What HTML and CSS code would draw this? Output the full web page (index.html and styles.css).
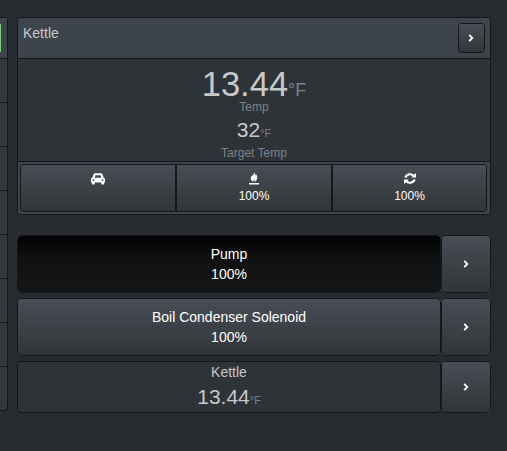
FILE: index.html
```
<!DOCTYPE html>
<html lang="en">
<head>
    <meta charset="UTF-8">
    <meta name="viewport" content="width=device-width, initial-scale=1.0">
    <title>Kettle</title>
    <link rel="stylesheet" href="styles.css">
</head>
<body>
    <svg width="0" height="0" class="defs">
        <symbol id="chevron" viewBox="0 0 6 8">
            <path d="M1.2 0.9 L4.3 4 L1.2 7.1" fill="none" stroke="#fff" stroke-width="1.8"/>
        </symbol>
    </svg>
    <div class="page">
        <div class="side">
            <div class="side-head"><span class="side-btn"></span></div>
            <div class="side-item"></div>
            <div class="side-item"></div>
            <div class="side-item"></div>
            <div class="side-item"></div>
            <div class="side-item"></div>
            <div class="side-item"></div>
            <div class="side-item"></div>
            <div class="side-item"></div>
        </div>
        <div class="main">
            <div class="panel">
                <div class="panel-heading">
                    <span>Kettle</span>
                    <button class="btn btn-small"><svg class="chevron"><use href="#chevron"/></svg></button>
                </div>
                <div class="panel-body">
                    <div class="temp">13.44<small>°F</small></div>
                    <div class="label">Temp</div>
                    <div class="target">32<small>°F</small></div>
                    <div class="label label-target">Target Temp</div>
                </div>
                <div class="panel-footer">
                    <button class="btn">
                        <svg class="icon icon-car" width="14" height="12" viewBox="0 0 14 12">
                            <path fill="#fff" fill-rule="evenodd" d="M0 6.6 Q0 5 1.4 4.8 L2.2 1.9 Q2.6 .3 4.2 .3 H9.8 Q11.4 .3 11.8 1.9 L12.6 4.8 Q14 5 14 6.6 V9.5 H13.2 V10.3 Q13.2 11.7 11.7 11.7 Q10.2 11.7 10.2 10.3 V9.5 H3.8 V10.3 Q3.8 11.7 2.3 11.7 Q.8 11.7 .8 10.3 V9.5 H0 Z M3.8 4.8 H10.2 L9.6 2.3 H4.4 Z M2.4 6.2 A.9 .9 0 1 0 2.4 8 A.9 .9 0 1 0 2.4 6.2 Z M11.6 6.2 A.9 .9 0 1 0 11.6 8 A.9 .9 0 1 0 11.6 6.2 Z"/>
                        </svg>
                    </button>
                    <button class="btn">
                        <svg class="icon" width="10" height="13" viewBox="0 0 10 13">
                            <path fill="#fff" d="M5.4 0 C6.1 1.6 6 2.4 6.4 3.2 L7.1 2.2 C9 4.8 8.8 8 5.6 9.9 C6 8.8 5.7 8.4 5.2 7.6 C4.6 8.3 4.2 9 4.6 9.9 C1.9 9.2 1.1 6.8 2.2 4.8 C3.2 3.2 5.5 2.6 5.4 0 Z M0 11 H10 V12.4 H0 Z"/>
                        </svg>
                        100%
                    </button>
                    <button class="btn">
                        <svg class="icon" width="12" height="13" viewBox="0 0 12 13">
                            <path fill="none" stroke="#fff" stroke-width="2.1" d="M1.3 5.6 A4.8 4.5 0 0 1 9.4 3.6 M10.7 7.4 A4.8 4.5 0 0 1 2.6 9.4"/>
                            <path fill="#fff" d="M12 1 V5.6 H7.2 Z M0 12 V7.4 H4.8 Z"/>
                        </svg>
                        100%
                    </button>
                </div>
            </div>
            <div class="row">
                <button class="btn btn-wide active">Pump<br>100%</button>
                <button class="btn btn-more"><svg class="chevron"><use href="#chevron"/></svg></button>
            </div>
            <div class="row">
                <button class="btn btn-wide">Boil Condenser Solenoid<br>100%</button>
                <button class="btn btn-more"><svg class="chevron"><use href="#chevron"/></svg></button>
            </div>
            <div class="row row-sensor">
                <div class="sensor">
                    <div>Kettle</div>
                    <div class="sensor-value">13.44<small>°F</small></div>
                </div>
                <button class="btn btn-more"><svg class="chevron"><use href="#chevron"/></svg></button>
            </div>
        </div>
    </div>
</body>
</html>
```
FILE: styles.css
```
* {
    box-sizing: border-box;
}
body {
    margin: 0;
    background-color: #272b30;
    color: #c8c8c8;
    font-family: "Liberation Sans", Arial, sans-serif;
    font-size: 14px;
    line-height: 20px;
}
.defs {
    display: block;
}
.page {
    display: flex;
    align-items: flex-start;
    gap: 9px;
    padding-top: 17px;
    height: 451px;
    overflow: hidden;
}
.side {
    width: 8px;
    border: 1px solid #15171a;
    border-left: none;
    border-radius: 0 4px 4px 0;
    background-color: #32383e;
}
.side-head {
    height: 40px;
    padding-top: 6px;
    background-color: #3e444c;
}
.side-btn {
    display: block;
    width: 1px;
    height: 28px;
    background-color: #7bcf7b;
}
.side-item {
    height: 44px;
    border-top: 1px solid #15171a;
}
.main {
    width: 474px;
}
.panel {
    height: 198px;
    margin-bottom: 20px;
    border: 1px solid #15171a;
    border-radius: 4px;
    background-color: #2e3338;
    overflow: hidden;
}
.panel-heading {
    display: flex;
    justify-content: space-between;
    height: 41px;
    padding: 5px;
    border-bottom: 1px solid #15171a;
    background-color: #3e444c;
}
.panel-body {
    height: 102px;
    text-align: center;
}
.temp {
    padding-top: 7px;
    font-size: 34.5px;
    line-height: 36px;
}
small {
    color: #7a8288;
    font-size: 52%;
    line-height: 1;
}
.label {
    margin-top: -1px;
    color: #7a8288;
    font-size: 12px;
    line-height: 12px;
}
.target {
    margin-top: 4px;
    font-size: 21px;
    line-height: 26px;
}
.label-target {
    margin-top: 4px;
}
.panel-footer {
    display: flex;
    height: 53px;
    padding: 2px 3px 2px 2px;
    border-top: 1px solid #15171a;
    background-color: #3e444c;
}
.btn {
    border: 1px solid #15171a;
    border-radius: 4px;
    padding: 0;
    background-image: linear-gradient(#484e55, #3a3f44 60%, #313539);
    color: #fff;
    font-family: inherit;
    font-size: 14px;
    line-height: 20px;
    cursor: pointer;
}
.btn-small {
    width: 27px;
    height: 30px;
    padding: 0 1px 2px 0;
    border-radius: 3px;
}
.panel-footer .btn {
    width: 156px;
    display: flex;
    flex-direction: column;
    align-items: center;
    flex-shrink: 0;
    height: 48px;
    padding-top: 7px;
    border-radius: 0;
    font-size: 12px;
    line-height: 18px;
}
.panel-footer .btn:first-child {
    border-radius: 3px 0 0 3px;
}
.panel-footer .btn:last-child {
    width: 155px;
    border-radius: 0 3px 3px 0;
}
.icon {
    display: block;
    margin-bottom: 2px;
    flex-shrink: 0;
}
.icon-car {
    margin-top: 1px;
}
.chevron {
    width: 6px;
    height: 8px;
}
.row {
    display: flex;
    height: 58px;
    margin-bottom: 5px;
}
.btn-wide,
.sensor {
    width: 424px;
}
.btn-more {
    width: 50px;
    padding: 0 1px 2px 0;
}
.btn.active {
    background-image: linear-gradient(#020202, #101112 40%, #141618);
}
.row-sensor {
    height: 52px;
}
.sensor {
    border: 1px solid #15171a;
    border-radius: 4px;
    background-color: #2e3338;
    text-align: center;
}
.sensor-value {
    font-size: 21px;
    line-height: 30px;
}
```
